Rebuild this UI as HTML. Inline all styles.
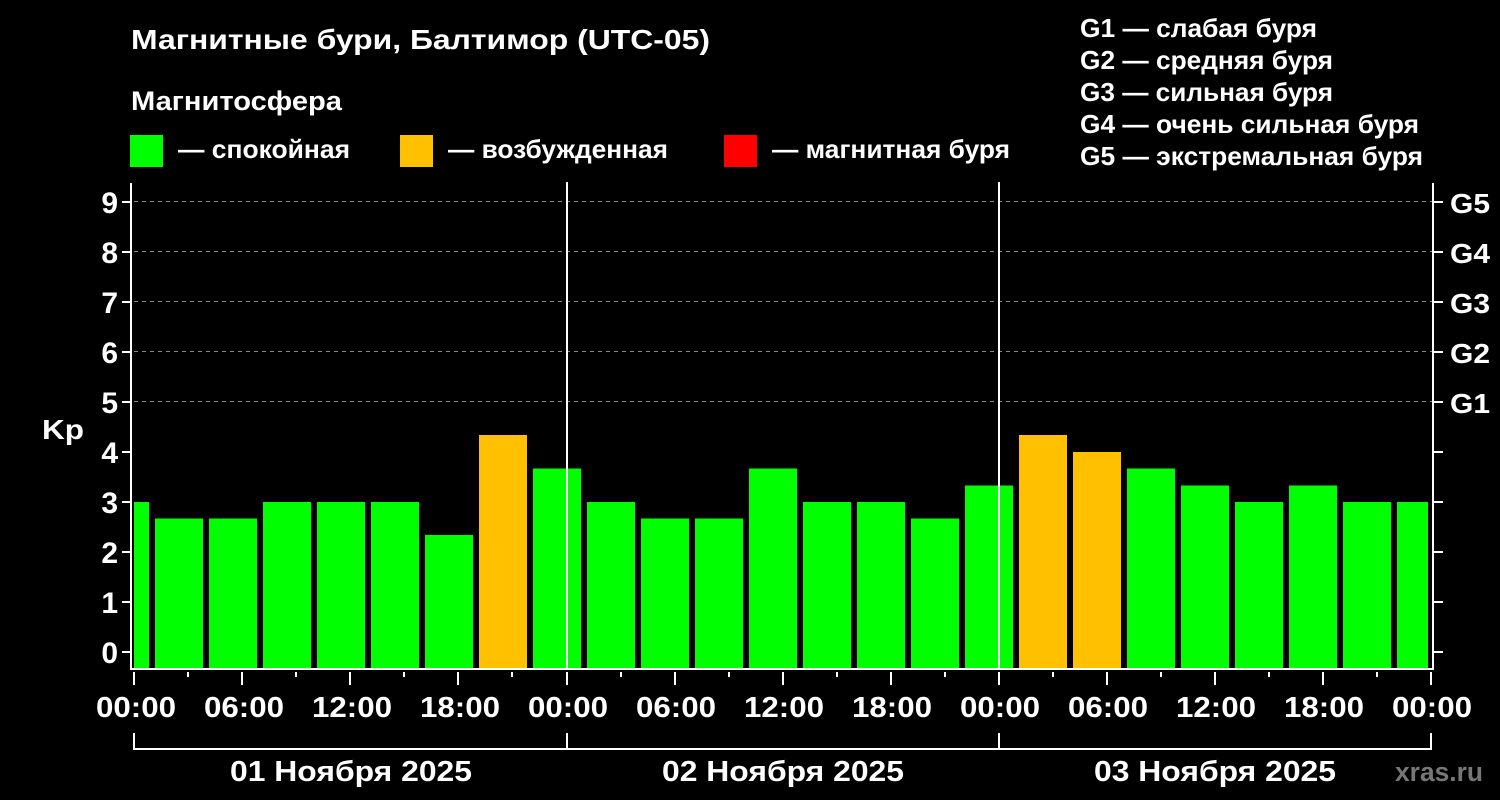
<!DOCTYPE html>
<html><head><meta charset="utf-8"><style>html,body{margin:0;padding:0;background:#000;width:1500px;height:800px;overflow:hidden}svg{display:block}text{font-family:"Liberation Sans",Arial,sans-serif;font-weight:bold;fill:#fff}</style></head><body>
<svg width="1500" height="800" xmlns="http://www.w3.org/2000/svg">
<rect width="1500" height="800" fill="#000"/>
<text x="131" y="49" font-size="28" textLength="579" lengthAdjust="spacingAndGlyphs">Магнитные бури, Балтимор (UTC-05)</text>
<text x="131" y="110" font-size="27" textLength="211" lengthAdjust="spacingAndGlyphs">Магнитосфера</text>
<rect x="130" y="135" width="33" height="32" fill="#00ff00"/>
<text x="178" y="158" font-size="26" textLength="172" lengthAdjust="spacingAndGlyphs">— спокойная</text>
<rect x="400" y="135" width="33" height="32" fill="#ffc000"/>
<text x="448" y="158" font-size="26" textLength="220" lengthAdjust="spacingAndGlyphs">— возбужденная</text>
<rect x="724" y="135" width="33" height="32" fill="#ff0000"/>
<text x="772" y="158" font-size="26" textLength="238" lengthAdjust="spacingAndGlyphs">— магнитная буря</text>
<text x="1080" y="37" font-size="26" textLength="237" lengthAdjust="spacingAndGlyphs">G1 — слабая буря</text>
<text x="1080" y="69" font-size="26" textLength="253" lengthAdjust="spacingAndGlyphs">G2 — средняя буря</text>
<text x="1080" y="101" font-size="26" textLength="253" lengthAdjust="spacingAndGlyphs">G3 — сильная буря</text>
<text x="1080" y="133" font-size="26" textLength="339" lengthAdjust="spacingAndGlyphs">G4 — очень сильная буря</text>
<text x="1080" y="165" font-size="26" textLength="343" lengthAdjust="spacingAndGlyphs">G5 — экстремальная буря</text>
<g stroke="#888" stroke-dasharray="4,4" stroke-width="1">
<line x1="134" x2="1432" y1="201.5" y2="201.5"/><line x1="134" x2="1432" y1="251.5" y2="251.5"/>
<line x1="134" x2="1432" y1="301.5" y2="301.5"/><line x1="134" x2="1432" y1="351.5" y2="351.5"/>
<line x1="134" x2="1432" y1="401.5" y2="401.5"/>
</g>
<g>
<rect x="134" y="502" width="15" height="166" fill="#00ff00"/>
<rect x="155" y="518.5" width="48" height="149.5" fill="#00ff00"/>
<rect x="209" y="518.5" width="48" height="149.5" fill="#00ff00"/>
<rect x="263" y="502" width="48" height="166" fill="#00ff00"/>
<rect x="317" y="502" width="48" height="166" fill="#00ff00"/>
<rect x="371" y="502" width="48" height="166" fill="#00ff00"/>
<rect x="425" y="535" width="48" height="133" fill="#00ff00"/>
<rect x="479" y="435" width="48" height="233" fill="#ffc000"/>
<rect x="533" y="468.5" width="48" height="199.5" fill="#00ff00"/>
<rect x="587" y="502" width="48" height="166" fill="#00ff00"/>
<rect x="641" y="518.5" width="48" height="149.5" fill="#00ff00"/>
<rect x="695" y="518.5" width="48" height="149.5" fill="#00ff00"/>
<rect x="749" y="468.5" width="48" height="199.5" fill="#00ff00"/>
<rect x="803" y="502" width="48" height="166" fill="#00ff00"/>
<rect x="857" y="502" width="48" height="166" fill="#00ff00"/>
<rect x="911" y="518.5" width="48" height="149.5" fill="#00ff00"/>
<rect x="965" y="485.5" width="48" height="182.5" fill="#00ff00"/>
<rect x="1019" y="435" width="48" height="233" fill="#ffc000"/>
<rect x="1073" y="452" width="48" height="216" fill="#ffc000"/>
<rect x="1127" y="468.5" width="48" height="199.5" fill="#00ff00"/>
<rect x="1181" y="485.5" width="48" height="182.5" fill="#00ff00"/>
<rect x="1235" y="502" width="48" height="166" fill="#00ff00"/>
<rect x="1289" y="485.5" width="48" height="182.5" fill="#00ff00"/>
<rect x="1343" y="502" width="48" height="166" fill="#00ff00"/>
<rect x="1397" y="502" width="31" height="166" fill="#00ff00"/>
</g>
<g stroke="#fff" stroke-width="2" fill="none">
<polyline points="131,183 131,669 1433,669 1433,183"/>
<line x1="567" y1="182" x2="567" y2="669"/><line x1="999" y1="182" x2="999" y2="669"/>
<path d="M122 202H131M122 252H131M122 302H131M122 352H131M122 402H131M122 452H131M122 502H131M122 552H131M122 602H131M122 652H131"/>
<path d="M1434 202H1443M1434 252H1443M1434 302H1443M1434 352H1443M1434 402H1443M1434 452H1443M1434 502H1443M1434 552H1443M1434 602H1443M1434 652H1443"/>
<path d="M134 672V685M242 672V685M350 672V685M458 672V685M567 672V685M675 672V685M783 672V685M891 672V685M999 672V685M1107 672V685M1215 672V685M1323 672V685M1431 672V685"/>
<path d="M188 672V677M296 672V677M404 672V677M512 672V677M621 672V677M729 672V677M837 672V677M945 672V677M1053 672V677M1161 672V677M1269 672V677M1377 672V677"/>
<path d="M134 733V749H1431V733M567 733V749M999 733V749"/>
</g>
<g font-size="30" text-anchor="end">
<text x="118" y="213">9</text><text x="118" y="263">8</text><text x="118" y="313">7</text><text x="118" y="363">6</text><text x="118" y="413">5</text><text x="118" y="463">4</text><text x="118" y="513">3</text><text x="118" y="563">2</text><text x="118" y="613">1</text><text x="118" y="663">0</text>
</g>
<g font-size="28">
<text x="1450" y="213" textLength="40" lengthAdjust="spacingAndGlyphs">G5</text><text x="1450" y="263" textLength="40" lengthAdjust="spacingAndGlyphs">G4</text><text x="1450" y="313" textLength="40" lengthAdjust="spacingAndGlyphs">G3</text><text x="1450" y="363" textLength="40" lengthAdjust="spacingAndGlyphs">G2</text><text x="1450" y="413" textLength="40" lengthAdjust="spacingAndGlyphs">G1</text>
</g>
<text x="42" y="439" font-size="28" textLength="42" lengthAdjust="spacingAndGlyphs">Kp</text>
<g font-size="29">
<text x="96" y="717" textLength="80" lengthAdjust="spacingAndGlyphs">00:00</text>
<text x="204" y="717" textLength="80" lengthAdjust="spacingAndGlyphs">06:00</text>
<text x="312" y="717" textLength="80" lengthAdjust="spacingAndGlyphs">12:00</text>
<text x="420" y="717" textLength="80" lengthAdjust="spacingAndGlyphs">18:00</text>
<text x="528" y="717" textLength="80" lengthAdjust="spacingAndGlyphs">00:00</text>
<text x="636" y="717" textLength="80" lengthAdjust="spacingAndGlyphs">06:00</text>
<text x="744" y="717" textLength="80" lengthAdjust="spacingAndGlyphs">12:00</text>
<text x="852" y="717" textLength="80" lengthAdjust="spacingAndGlyphs">18:00</text>
<text x="960" y="717" textLength="80" lengthAdjust="spacingAndGlyphs">00:00</text>
<text x="1068" y="717" textLength="80" lengthAdjust="spacingAndGlyphs">06:00</text>
<text x="1176" y="717" textLength="80" lengthAdjust="spacingAndGlyphs">12:00</text>
<text x="1284" y="717" textLength="80" lengthAdjust="spacingAndGlyphs">18:00</text>
<text x="1392" y="717" textLength="80" lengthAdjust="spacingAndGlyphs">00:00</text>
<text x="230" y="781" textLength="242" lengthAdjust="spacingAndGlyphs">01 Ноября 2025</text>
<text x="662" y="781" textLength="242" lengthAdjust="spacingAndGlyphs">02 Ноября 2025</text>
<text x="1094" y="781" textLength="242" lengthAdjust="spacingAndGlyphs">03 Ноября 2025</text>
</g>
<text x="1395" y="781" font-size="27" textLength="88" lengthAdjust="spacingAndGlyphs" style="fill:#777">xras.ru</text>
</svg>
</body></html>
